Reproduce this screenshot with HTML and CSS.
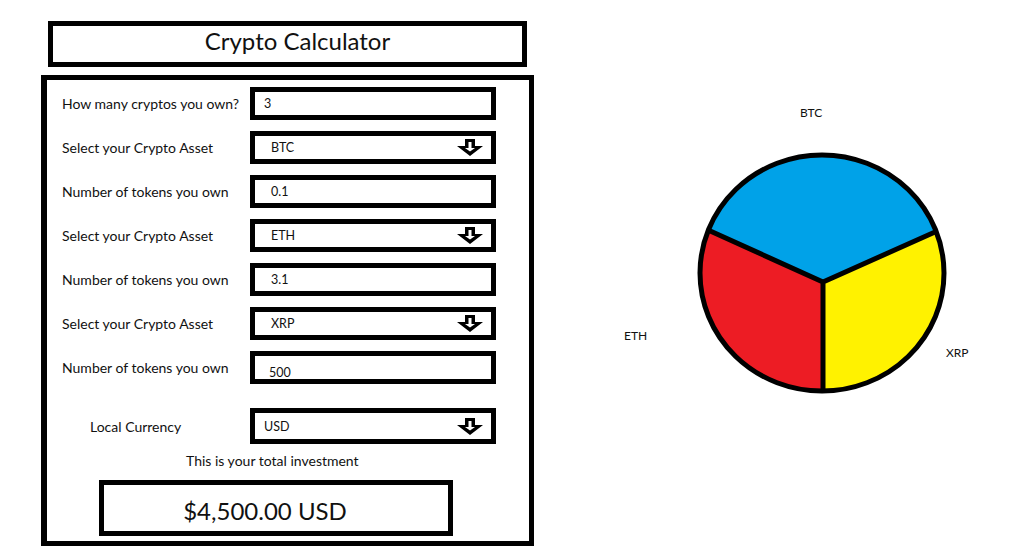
FILE: index.html
```html
<!DOCTYPE html>
<html>
<head>
<meta charset="utf-8">
<title>Crypto Calculator</title>
<link rel="stylesheet" href="styles.css">
</head>
<body>
<div class="page">
  <div class="left">
    <div class="title">Crypto Calculator</div>
    <div class="panel">
      <div class="row">
        <div class="label">How many cryptos you own?</div>
        <div class="box"><span class="val v-tight">3</span></div>
      </div>
      <div class="row">
        <div class="label">Select your Crypto Asset</div>
        <div class="box select"><span class="val">BTC</span>
          <svg class="arrow" width="26" height="17" viewBox="0 0 26 17"><path d="M8 0 H18 V7 H26 L13 17 L0 7 H8 Z" fill="#000"/><path d="M11.5 3 H14.5 V9 H18 L13 12.5 L8 9 H11.5 Z" fill="#fff"/></svg>
        </div>
      </div>
      <div class="row">
        <div class="label">Number of tokens you own</div>
        <div class="box"><span class="val">0.1</span></div>
      </div>
      <div class="row">
        <div class="label">Select your Crypto Asset</div>
        <div class="box select"><span class="val">ETH</span>
          <svg class="arrow" width="26" height="17" viewBox="0 0 26 17"><path d="M8 0 H18 V7 H26 L13 17 L0 7 H8 Z" fill="#000"/><path d="M11.5 3 H14.5 V9 H18 L13 12.5 L8 9 H11.5 Z" fill="#fff"/></svg>
        </div>
      </div>
      <div class="row">
        <div class="label">Number of tokens you own</div>
        <div class="box"><span class="val">3.1</span></div>
      </div>
      <div class="row">
        <div class="label">Select your Crypto Asset</div>
        <div class="box select"><span class="val">XRP</span>
          <svg class="arrow" width="26" height="17" viewBox="0 0 26 17"><path d="M8 0 H18 V7 H26 L13 17 L0 7 H8 Z" fill="#000"/><path d="M11.5 3 H14.5 V9 H18 L13 12.5 L8 9 H11.5 Z" fill="#fff"/></svg>
        </div>
      </div>
      <div class="row">
        <div class="label">Number of tokens you own</div>
        <div class="box"><span class="val v-low">500</span></div>
      </div>
      <div class="row currency">
        <div class="label label-indent">Local Currency</div>
        <div class="box select"><span class="val v-tight">USD</span>
          <svg class="arrow" width="26" height="17" viewBox="0 0 26 17"><path d="M8 0 H18 V7 H26 L13 17 L0 7 H8 Z" fill="#000"/><path d="M11.5 3 H14.5 V9 H18 L13 12.5 L8 9 H11.5 Z" fill="#fff"/></svg>
        </div>
      </div>
      <div class="total-caption">This is your total investment</div>
      <div class="total">$4,500.00 USD</div>
    </div>
  </div>
  <div class="chart">
    <svg class="pie" width="400" height="300" viewBox="0 0 400 300">
      <path d="M223 182 L108 130 A122 118 0 0 1 335 132 Z" fill="#00a2e8"/>
      <path d="M223 182 L223 291 A122 118 0 0 1 108 130 Z" fill="#ed1c24"/>
      <path d="M223 182 L335 132 A122 118 0 0 1 223 291 Z" fill="#fff200"/>
      <ellipse cx="222" cy="173" rx="122" ry="118" fill="none" stroke="#000" stroke-width="5"/>
      <path d="M108 130 L223 182 L335 132 M223 182 L223 291" fill="none" stroke="#000" stroke-width="5"/>
    </svg>
    <span class="slice-label lbl-btc">BTC</span>
    <span class="slice-label lbl-eth">ETH</span>
    <span class="slice-label lbl-xrp">XRP</span>
  </div>
</div>
</body>
</html>
```

FILE: styles.css
```css
html, body {
  margin: 0;
  padding: 0;
  background: #fff;
}

body {
  font-family: Lato, "Open Sans", sans-serif;
  color: #111;
}

.page {
  display: flex;
  align-items: flex-start;
}

.left {
  margin-left: 41px;
  padding-top: 21px;
  width: 493px;
}

.title {
  box-sizing: border-box;
  margin-left: 7px;
  width: 479px;
  height: 46px;
  border: 5px solid #000;
  display: flex;
  align-items: center;
  justify-content: center;
  padding-left: 20px;
  padding-bottom: 8px;
  font-size: 24px;
  color: #111;
}

.panel {
  box-sizing: border-box;
  margin-top: 8px;
  width: 493px;
  height: 471px;
  border: 5px solid #000;
  border-left-width: 6px;
  padding-top: 7px;
  display: flex;
  flex-direction: column;
  gap: 11px;
}

.row {
  display: flex;
  align-items: center;
  height: 33px;
  flex-shrink: 0;
}

.row.currency {
  margin-top: 13px;
  height: 36px;
}

.label {
  box-sizing: border-box;
  width: 203px;
  padding-left: 15px;
  font-size: 14px;
  color: #111;
}

.label-indent {
  padding-left: 43px;
}

.box {
  box-sizing: border-box;
  width: 246px;
  height: 100%;
  border: 5px solid #000;
  display: flex;
  align-items: center;
  padding-left: 16px;
  padding-right: 8px;
  font-size: 12.5px;
}

.select {
  justify-content: space-between;
}

.val {
  color: #111;
}

.v-tight {
  margin-left: -7px;
}

.v-low {
  margin-left: -2px;
  margin-top: 9px;
}

.arrow {
  display: block;
}

.total-caption {
  margin-top: -3px;
  margin-left: 139px;
  font-size: 14px;
  color: #111;
  flex-shrink: 0;
}

.total {
  box-sizing: border-box;
  flex-shrink: 0;
  margin-left: 52px;
  margin-top: 0;
  width: 354px;
  height: 56px;
  border: 5px solid #000;
  display: flex;
  align-items: center;
  justify-content: center;
  padding-right: 22px;
  padding-top: 4px;
  font-size: 24px;
  color: #111;
}

.chart {
  position: relative;
  margin-left: 66px;
  margin-top: 100px;
  width: 400px;
  height: 300px;
}

.pie {
  display: block;
}

.slice-label {
  position: absolute;
  font-size: 12px;
  line-height: 14px;
  color: #111;
}

.lbl-btc {
  left: 200px;
  top: 6px;
}

.lbl-eth {
  left: 24px;
  top: 229px;
}

.lbl-xrp {
  left: 346px;
  top: 246px;
}
```
